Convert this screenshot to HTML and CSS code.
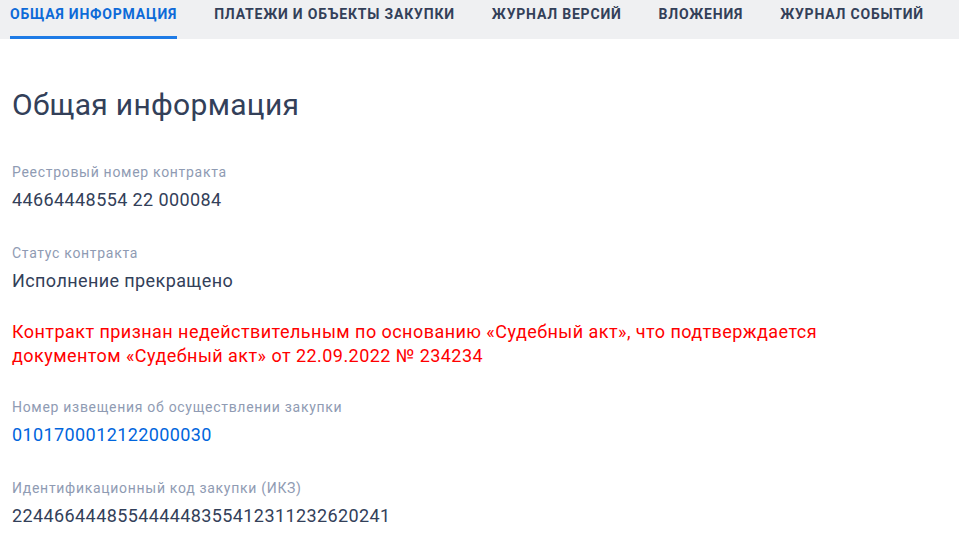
FILE: index.html
```html
<!DOCTYPE html>
<html lang="ru">
<head>
    <meta charset="UTF-8">
    <meta name="viewport" content="width=device-width, initial-scale=1.0">
    <title>Общая информация</title>
    <link rel="stylesheet" href="styles.css">
</head>
<body>
    <nav class="tabs">
        <a class="tab active" href="#">Общая информация</a>
        <a class="tab" href="#">Платежи и объекты закупки</a>
        <a class="tab" href="#">Журнал версий</a>
        <a class="tab" href="#">Вложения</a>
        <a class="tab" href="#">Журнал событий</a>
    </nav>
    <main class="content">
        <h1>Общая информация</h1>
        <div class="field">
            <div class="label">Реестровый номер контракта</div>
            <div class="value">44664448554 22 000084</div>
        </div>
        <div class="field">
            <div class="label">Статус контракта</div>
            <div class="value">Исполнение прекращено</div>
        </div>
        <p class="warning">Контракт признан недействительным по основанию «Судебный акт», что подтверждается документом «Судебный акт» от 22.09.2022 № 234234</p>
        <div class="field">
            <div class="label">Номер извещения об осуществлении закупки</div>
            <div class="value"><a href="#">0101700012122000030</a></div>
        </div>
        <div class="field">
            <div class="label">Идентификационный код закупки (ИКЗ)</div>
            <div class="value">224466444855444448355412311232620241</div>
        </div>
    </main>
</body>
</html>
```
FILE: styles.css
```css
body {
    font-family: Roboto, "Liberation Sans", sans-serif;
    margin: 0;
    padding: 0;
    color: #334059;
    background: #fff;
}
.tabs {
    display: flex;
    gap: 37px;
    height: 39px;
    padding: 0 10px;
    background: #eff0f2;
}
.tab {
    display: block;
    padding-top: 6px;
    height: 30px;
    font-size: 14px;
    font-weight: bold;
    letter-spacing: 0.8px;
    text-transform: uppercase;
    text-decoration: none;
    color: #334059;
    border-bottom: 3px solid transparent;
}
.tab.active {
    color: #0d6ad8;
    border-bottom-color: #1e7be6;
}
.content {
    padding: 46px 12px 20px;
}
h1 {
    margin: 0 0 37px;
    font-size: 30px;
    font-weight: normal;
    line-height: 40px;
    letter-spacing: 0.3px;
}
.field {
    margin-bottom: 31px;
}
.label {
    font-size: 14px;
    line-height: 20px;
    letter-spacing: 0.7px;
    color: #8f9bb3;
    margin-bottom: 6px;
}
.value {
    font-size: 18px;
    line-height: 24px;
    letter-spacing: 0.4px;
}
.value a {
    color: #0065dd;
    text-decoration: none;
}
.warning {
    margin: -4px 0 29px;
    font-size: 18px;
    line-height: 24px;
    letter-spacing: 0.45px;
    color: #ff0000;
    max-width: 840px;
}
```
